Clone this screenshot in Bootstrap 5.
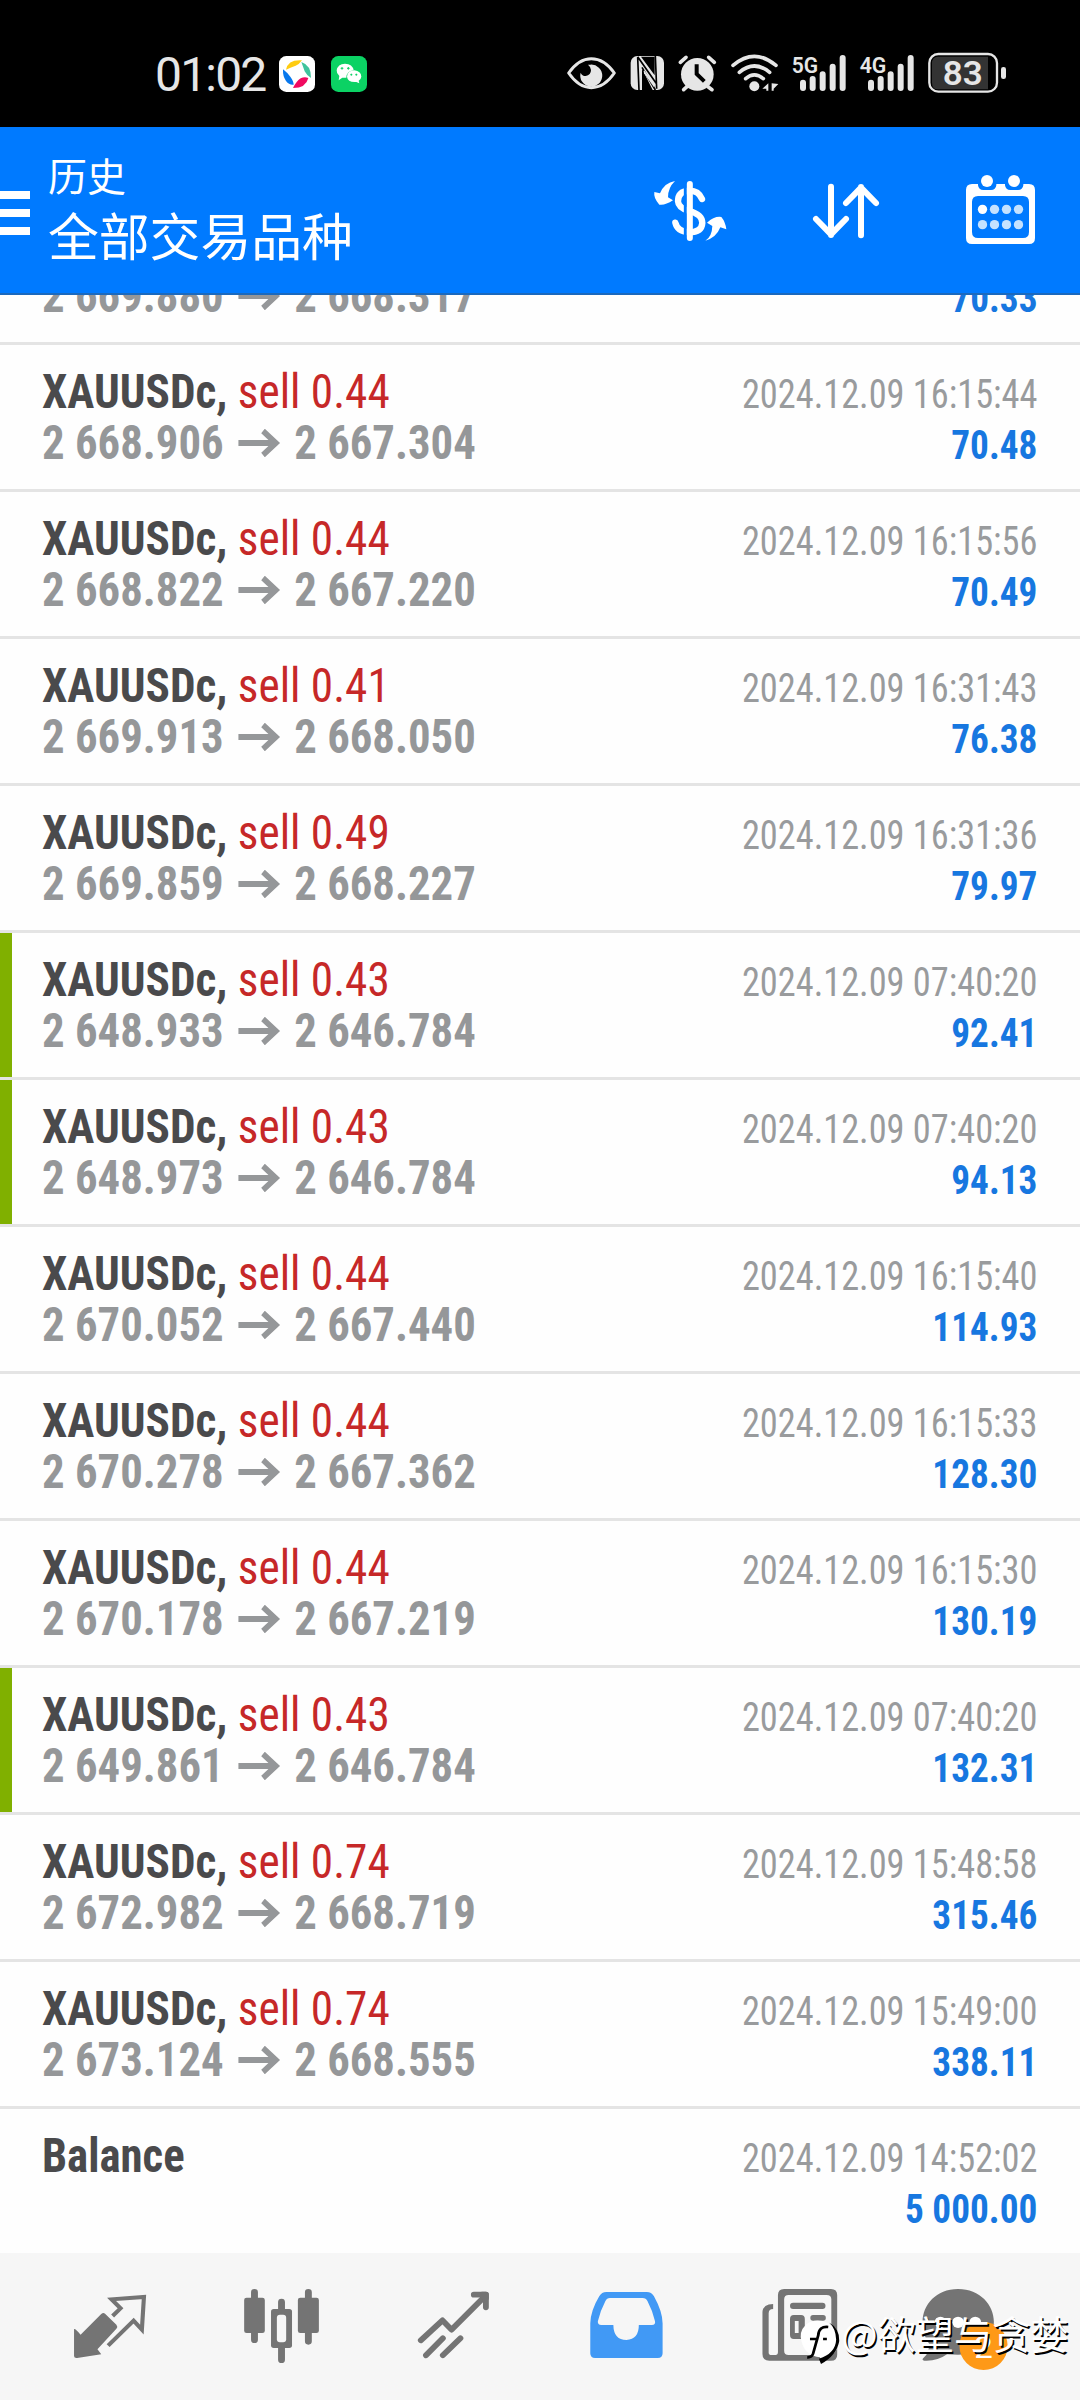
<!DOCTYPE html>
<html lang="zh-CN">
<head>
<meta charset="utf-8">
<meta name="viewport" content="width=device-width, initial-scale=1">
<title>历史</title>
<link href="https://cdn.jsdelivr.net/npm/bootstrap@5.3.0/dist/css/bootstrap.min.css" rel="stylesheet">
<style>
  body { width: 1080px; height: 2400px; overflow: hidden; background: #fefefe; font-family: Roboto, "Noto Sans CJK SC", sans-serif; }
  svg { display: block; flex: none; }
  .statusbar { height: 127px; background: #000; color: #e6e6e6; padding-left: 155px; }
  .clock { font-size: 48px; line-height: 1; letter-spacing: -1.8px; width: 124px; padding-top: 51px; white-space: nowrap; }
  .status-art { margin-top: 30px; }
  .appbar { height: 168px; background: #007aff; border-bottom: 2px solid #1b69bd; z-index: 2; }
  .menu-bars { width: 30px; padding-top: 64px; gap: 10px; }
  .menu-bars i { height: 8px; background: #fff; }
  .titles { padding-left: 18px; width: 589px; color: #fff; font-family: "Noto Sans CJK SC", sans-serif; }
  .title-sub { font-size: 39px; line-height: 58px; margin-top: 18px; }
  .title-main { font-size: 50.8px; line-height: 60px; margin-top: 1px; }
  .history { height: 1958px; overflow: hidden; }
  .deal { height: 147px; flex: none; padding: 21px 42px 0 42px; border-bottom: 3px solid #e4e4e4; position: relative; }
  .deal-cut { height: 75px; margin-top: -25px; padding-top: 0; }
  .deal:last-child { border-bottom: 0; }
  .deal-marked::before { content: ""; position: absolute; left: 0; top: 0; bottom: 0; width: 12px; background: #80b000; }
  .line { height: 51px; line-height: 51px; white-space: nowrap; font-stretch: 75%; font-size: 48.8px; transform: scaleX(.927); transform-origin: left; }
  .line svg { margin: 0 15px 0 16px; }
  .line-end { font-size: 40px; line-height: 58px; transform: scaleX(.932); transform-origin: right; margin-right: 1px; }
  .sym { color: #4a4a4c; font-weight: 700; }
  .side { color: #c62828; }
  .price { color: #959799; font-weight: 700; transform: scaleX(.917); }
  .balance { transform: scaleX(.917); }
  .stamp { color: #999b9d; transform: scaleX(.908); }
  .profit { color: #1777e0; font-weight: 700; }
  .tabbar { height: 147px; background: #f6f6f6; color: #747474; position: relative; }
  .watermark { position: absolute; left: 841.5px; top: 52px; color: #fff; font: 38.2px/56px "Noto Sans CJK SC", sans-serif; white-space: nowrap; text-shadow: 1.5px 1.5px 0 #000; }
</style>
<script src="https://cdn.jsdelivr.net/npm/bootstrap@5.3.0/dist/js/bootstrap.bundle.min.js"></script>
</head>
<body class="d-flex flex-column">
<header class="statusbar d-flex flex-shrink-0">
  <div class="clock">01:02</div>
  <svg class="status-art" width="271" height="90" viewBox="447 0 813 270">
    <rect x="447" y="78" width="108" height="108" rx="22" fill="#fff"/>
    <path d="M468 119Q474 88 516 91Q508 103 497 107Q484 112 468 119Z" fill="#fc1"/>
    <path d="M514 96Q544 106 543 144Q530 136 524 124Q520 112 514 96Z" fill="#3fc49c"/>
    <path d="M459 118Q472 128 481 140Q491 154 491 164Q478 166 468 153Q458 139 459 118Z" fill="#0878ed"/>
    <path d="M489 174Q498 155 512 145Q524 139 535 144Q528 174 489 174Z" fill="#f0095f"/>
    <rect x="603" y="78" width="108" height="108" rx="22" fill="#0bd264"/>
    <path d="M626 151L628 138Q619 130 620 121Q623 102 645 101Q668 102 671 121Q650 123 649 143Q642 144 637 143Z" fill="#fff"/>
    <path d="M651 140Q652 122 673 121Q693 123 694 140Q693 148 686 152L688 160L679 156Q653 158 651 140Z" fill="#fff"/>
    <path d="M632 115h8m-4-4v8M651 115h8m-4-4v8M661 134h6m-3-3v6M676 134h6m-3-3v6" stroke="#0bd264" stroke-width="3"/>
  </svg>
  <svg class="status-art" width="480" height="90" viewBox="0 0 1440 270" fill="#e6e6e6">
    <path d="M56 129Q86 86 124 86Q163 86 193 129Q163 173 124 173Q86 173 56 129Z" fill="none" stroke="#e6e6e6" stroke-width="9" stroke-linejoin="round"/>
    <path d="M121 104A33 33 0 1 1 92 128Q96 138 107 138Q123 135 123 120Q122 110 114 104Z"/>
    <rect x="242" y="78" width="100" height="102" rx="20"/>
    <path d="M263 82L267 180M263 80L320 162M316 78L320 176M276 112L316 180" fill="none" stroke="#000" stroke-width="5"/><path d="M276 116V180H308ZM304 80H314V136L273 80Z" fill="#000"/><path d="M282 130L312 172V160L282 120Z"/>
    <circle cx="442" cy="133" r="49"/><path d="M391 97L408 82M493 97L476 82M411 170L401 179M474 170L486 179" stroke="#e6e6e6" stroke-width="11" stroke-linecap="round"/><path d="M440 103V132L463 154" fill="none" stroke="#000" stroke-width="12"/>
    <g fill="none" stroke="#e6e6e6" stroke-width="11" stroke-linecap="round"><path d="M549 106Q613 52 678 106"/><path d="M568 127Q613 89 659 127"/><path d="M587 146Q613 123 640 146"/></g><circle cx="613" cy="169" r="15"/><path d="M655 160V182H649V176H637ZM665 160V182H671V176L685 162Z"/>
    <g font-family="Roboto" font-size="68" font-weight="600"><text x="725" y="128" textLength="79" lengthAdjust="spacingAndGlyphs">5G</text><text x="929" y="128" textLength="80" lengthAdjust="spacingAndGlyphs">4G</text></g>
    <g stroke="#e6e6e6" stroke-width="18" stroke-linecap="round"><path d="M759 158V174M788 147V174M818 133V174M848 110V174M878 84V174M963 158V174M992 147V174M1022 133V174M1052 110V174M1082 84V174"/></g>
    <rect x="1138" y="72" width="203" height="113" rx="27" fill="#000" stroke="#e6e6e6" stroke-width="7"/><path d="M1164 80H1314V178H1164Q1146 178 1146 158V100Q1146 80 1164 80Z" fill="#333"/><rect x="1353" y="111" width="15" height="36" rx="7"/>
    <text x="1178" y="165" font-family="Roboto" font-weight="600" font-size="102" textLength="120" lengthAdjust="spacingAndGlyphs">83</text>
  </svg>
</header>

<nav class="appbar d-flex flex-shrink-0 position-relative">
  <div class="menu-bars d-flex flex-column"><i></i><i></i><i></i></div>
  <div class="titles"><div class="title-sub">历史</div><div class="title-main">全部交易品种</div></div>
  <svg width="461" height="166" viewBox="57 21 1383 498" fill="#fff">
    <path d="M225 183Q193 188 180 220L163 216Q160 234 178 254Q195 257 219 241L204 232Q204 203 225 183Z"/>
    <path d="M316 362Q336 350 337 318L321 308Q343 288 364 291Q376 305 379 328L361 322Q349 353 316 362Z"/>
    <path d="M306 237Q295 211 267 212Q234 214 234 244Q235 263 267 273Q307 283 307 309Q305 337 267 337Q232 335 226 308" fill="none" stroke="#fff" stroke-width="19" stroke-linecap="round"/>
    <path d="M256 195V355" stroke="#007aff" stroke-width="9"/><path d="M269.500 192V354" stroke="#fff" stroke-width="18" stroke-linecap="round"/>
    <path d="M693 200V345M648 297L693 343L738 297M783 346V201M738 249L783 203L828 249" fill="none" stroke="#fff" stroke-width="18" stroke-linecap="round" stroke-linejoin="round"/>
    <path fill-rule="evenodd" d="M1116 192H1287Q1305 192 1305 210V354Q1305 372 1287 372H1116Q1098 372 1098 354V210Q1098 192 1116 192ZM1134 228Q1116 228 1116 246V336Q1116 354 1134 354H1269Q1287 354 1287 336V246Q1287 228 1269 228Z"/>
    <path d="M1134 188H1189V196Q1187 210 1173 210H1150Q1136 210 1134 196ZM1215 188H1270V196Q1268 210 1254 210H1231Q1217 210 1215 196Z" fill="#007aff"/>
    <circle cx="1161" cy="183" r="18"/><circle cx="1242" cy="183" r="18"/><circle cx="1147.500" cy="268" r="14"/>
    <g fill="#c5e2ff"><circle cx="1183.500" cy="268" r="14"/><circle cx="1219.500" cy="268" r="14"/><circle cx="1255.500" cy="268" r="14"/><circle cx="1147.500" cy="314" r="14"/><circle cx="1183.500" cy="314" r="14"/><circle cx="1219.500" cy="314" r="14"/><circle cx="1255.500" cy="314" r="14"/></g>
  </svg>
</nav>

<main class="history d-flex flex-column flex-shrink-0" id="history"></main>

<footer class="tabbar d-flex flex-shrink-0">
  <svg width="180" height="147" viewBox="0 69 522.700 441" preserveAspectRatio="none" fill="currentColor">
    <path d="M215 297Q220 296 234 314L294 252Q300 247 305 251L338 284Q343 290 338 296L283 358L294 373L224 384Q215 385 215 378Z"/>
    <path d="M327 258L350 235L324 208L418 201L412 299L388 272L314 347" fill="none" stroke="currentColor" stroke-width="12"/>
  </svg>
  <svg width="180" height="147" viewBox="522.700 69 522.700 441" preserveAspectRatio="none" fill="currentColor">
    <path d="M739 187V329M895.500 187V334M817.500 216V240M817.500 350V389" stroke="currentColor" stroke-width="20" stroke-linecap="round"/>
    <rect x="709" y="203" width="60" height="106" rx="7"/><rect x="865" y="203" width="61" height="106" rx="7"/>
    <rect x="787" y="237" width="61" height="117" rx="8"/><rect x="804" y="254" width="27" height="83" rx="9" fill="#f6f6f6"/>
  </svg>
  <svg width="180" height="147" viewBox="1045.400 69 522.700 441" preserveAspectRatio="none" fill="none" stroke="currentColor" stroke-width="17" stroke-linecap="round" stroke-linejoin="round">
    <path d="M1222 331L1285 271L1311 299L1406 201M1237 376L1286 325M1286 376L1337 325"/><path d="M1376 194H1411V232"/><path d="M1400 194L1411 205V194Z"/>
  </svg>
  <svg width="180" height="147" viewBox="0 69 522.700 441" preserveAspectRatio="none">
    <path fill="#4199f5" fill-rule="evenodd" d="M193 186H310Q324 186 331 199Q356 246 356 280V370Q356 384 342 384H160Q146 384 146 370V280Q147 242 172 199Q179 186 193 186ZM203 204Q194 204 190 213Q176 240 168 274Q167 285 178 285H213Q214 330 251 330Q287 328 287 285H325Q336 285 334 274Q326 240 312 213Q308 204 298 204Z"/>
  </svg>
  <svg width="180" height="147" viewBox="522.700 69 522.700 441" preserveAspectRatio="none" fill="currentColor">
    <path fill-rule="evenodd" d="M709 177H845Q863 177 863 195V374Q863 392 845 392H666Q646 392 646 372V246Q648 222 677 222V237Q664 237 664 250V368Q664 375 673 375H684Q691 375 691 366V195Q691 177 709 177ZM722 195Q709 195 709 208V362Q709 375 722 375H832Q846 375 846 362V208Q846 195 832 195Z"/>
    <rect x="726" y="218" width="103" height="19" rx="9"/><rect x="785" y="255" width="45" height="17" rx="8"/><path fill-rule="evenodd" d="M737 255H758Q769 255 769 267V327H737Q726 327 726 315V267Q726 255 737 255ZM740 273V309H751V273Z"/>
    <path d="M772 284Q800 262 836 279Q870 291 869 336Q863 376 817 391L813 382Q771 378 760 337Q750 306 772 284Z" fill="#fff"/>
    <path d="M840 278Q870 294 869 333Q862 376 816 402L810 386Q858 370 860 329Q859 295 840 278Z" fill="#000"/>
    <path d="M837 291Q810 288 808 316L793 371Q789 383 776 382M784 327H804M822 327H833" fill="none" stroke="#000" stroke-width="8"/>
  </svg>
  <svg width="180" height="147" viewBox="1045.400 69 522.700 441" preserveAspectRatio="none" fill="currentColor">
    <path d="M1214 177C1278 177 1318 225 1318 275S1278 374 1214 374L1182 373Q1154 394 1116 392Q1107 390 1114 383Q1130 371 1130 341Q1111 316 1111 275C1111 225 1150 177 1214 177Z"/>
    <circle cx="1163" cy="277" r="17" fill="#fff"/><circle cx="1214" cy="277" r="17" fill="#fff"/><circle cx="1264" cy="277" r="17" fill="#fff"/>
    <ellipse cx="1288" cy="348" rx="70" ry="72" fill="#fe9917"/>
    <text x="1288" y="383" font-family="Roboto" font-size="96" text-anchor="middle" fill="#fff">2</text>
  </svg>
  <div class="watermark">@欲望与贪婪</div>
</footer>

<script>
  const deals = [
    ["0.44", "2 668.906", "2 667.304", "2024.12.09 16:15:44", "70.48"],
    ["0.44", "2 668.822", "2 667.220", "2024.12.09 16:15:56", "70.49"],
    ["0.41", "2 669.913", "2 668.050", "2024.12.09 16:31:43", "76.38"],
    ["0.49", "2 669.859", "2 668.227", "2024.12.09 16:31:36", "79.97"],
    ["0.43", "2 648.933", "2 646.784", "2024.12.09 07:40:20", "92.41", true],
    ["0.43", "2 648.973", "2 646.784", "2024.12.09 07:40:20", "94.13", true],
    ["0.44", "2 670.052", "2 667.440", "2024.12.09 16:15:40", "114.93"],
    ["0.44", "2 670.278", "2 667.362", "2024.12.09 16:15:33", "128.30"],
    ["0.44", "2 670.178", "2 667.219", "2024.12.09 16:15:30", "130.19"],
    ["0.43", "2 649.861", "2 646.784", "2024.12.09 07:40:20", "132.31", true],
    ["0.74", "2 672.982", "2 668.719", "2024.12.09 15:48:58", "315.46"],
    ["0.74", "2 673.124", "2 668.555", "2024.12.09 15:49:00", "338.11"]
  ];
  const arrow = '<svg width="46" height="28" viewBox="0 0 46 28" fill="none" stroke="#959799" stroke-width="6"><path d="M0 14H41M27 2L41 14L27 26"/></svg>';
  const prices = (open, close) => `<div class="line price d-flex align-items-center">${open}${arrow}${close}</div>`;
  const gain = (profit) => `<div class="line line-end profit">${profit}</div>`;
  const right = (stamp, profit) => `<div class="text-end"><div class="line line-end stamp">${stamp}</div>${gain(profit)}</div>`;
  document.getElementById("history").innerHTML = `
    <article class="deal deal-cut d-flex justify-content-between">${prices("2 669.880", "2 668.317")}${gain("70.33")}</article>` +
    deals.map(([lot, open, close, stamp, profit, marked]) => `
    <article class="deal d-flex justify-content-between${marked ? " deal-marked" : ""}">
      <div>
        <div class="line"><span class="sym">XAUUSDc, </span><span class="side">sell ${lot}</span></div>
        ${prices(open, close)}
      </div>${right(stamp, profit)}
    </article>`).join("") + `
    <article class="deal d-flex justify-content-between">
      <div><div class="line sym balance">Balance</div></div>${right("2024.12.09 14:52:02", "5 000.00")}
    </article>`;
</script>
</body>
</html>
